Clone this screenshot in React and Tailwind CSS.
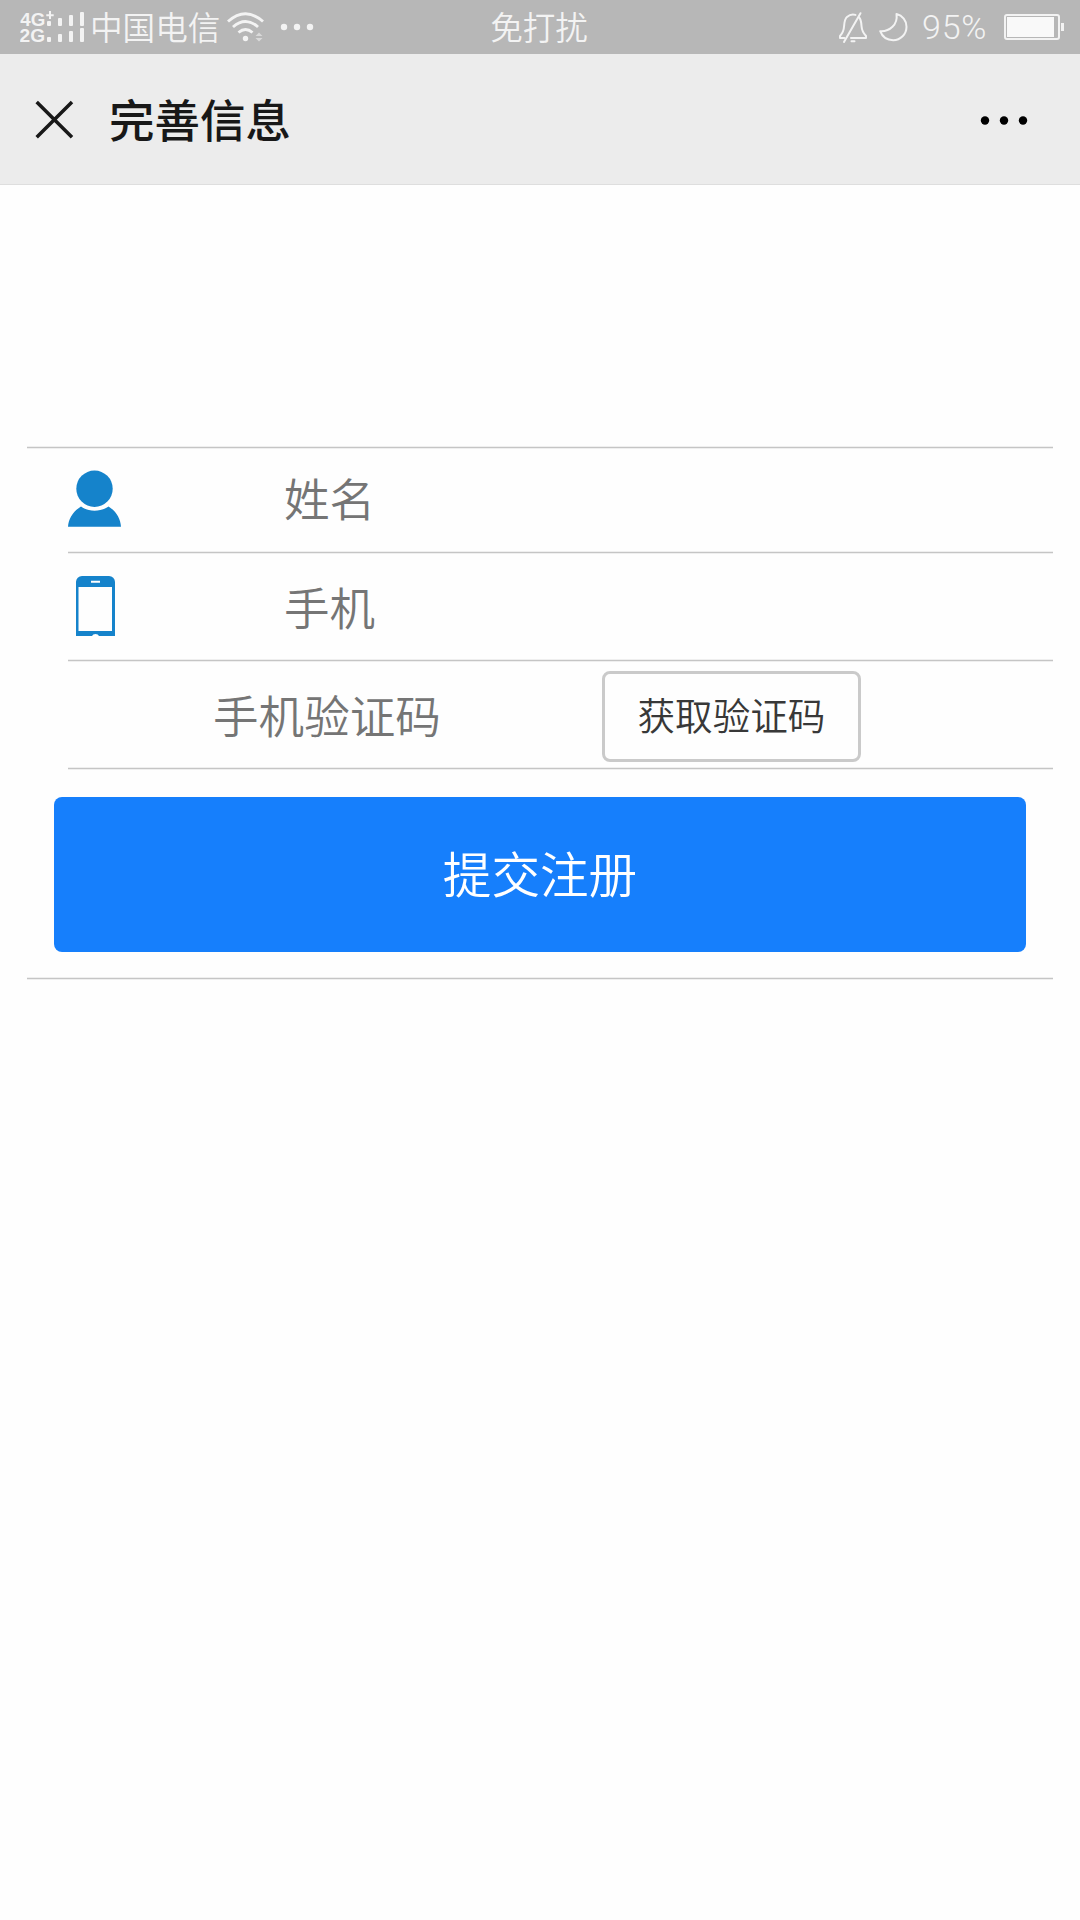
import React from 'react'

const Divider = ({ className = '' }) => (
    <div className={`h-[3px] shrink-0 border-y border-[#efefef] bg-[#c5c5c5] ${className}`} />
)

function SignalIcon() {
    return (
        <div className="flex h-[54px] w-[66px] shrink-0">
            <svg width="66" height="54" viewBox="20 0 66 54" fill="currentColor">
                <g fontFamily="Liberation Sans, sans-serif" fontSize="18.500" fontWeight="700">
                    <text x="20.300" y="25.600" textLength="25" lengthAdjust="spacingAndGlyphs">4G</text>
                    <text x="19.500" y="41.800" textLength="25.500" lengthAdjust="spacingAndGlyphs">2G</text>
                </g>
                <path d="M46.300 14.200h7.400v2h-7.400zM49 11h2v8h-2z" />
                <rect x="47" y="21" width="4" height="5" rx="1" />
                <rect x="58" y="18" width="4" height="8" rx="1" />
                <rect x="69" y="15" width="4" height="11" rx="1" />
                <rect x="80" y="12" width="4" height="14" rx="1" />
                <rect x="47" y="37" width="4" height="5" rx="1" />
                <rect x="58" y="34" width="4" height="8" rx="1" />
                <rect x="69" y="31" width="4" height="11" rx="1" />
                <rect x="80" y="28" width="4" height="14" rx="1" />
            </svg>
        </div>
    )
}

function StatusBar() {
    return (
        <div className="grid h-[54px] grid-cols-[1fr_auto_1fr] items-center bg-[#b7b7b7] text-[32.6px] leading-[54px] font-[350] text-[#f3f3f3]">
            <div className="flex items-center pl-5">
                <SignalIcon />
                <span className="ml-[4px] pb-[3px] leading-[51px]">中国电信</span>
                <svg className="ml-[5px]" width="40" height="54" viewBox="225 0 40 54" fill="none" stroke="currentColor" strokeWidth="2.900">
                    <path d="M228 21.500Q245.500 6 263 21.500" />
                    <path d="M233 27Q245.500 16 258 27" />
                    <path d="M238.500 32.500Q245.500 26.500 252.500 32.500" />
                    <circle cx="245.500" cy="38.500" r="2.700" fill="currentColor" stroke="none" />
                    <path d="M255.500 36l3.500-3.500 3.500 3.500zM255.500 38l3.500 3.500 3.500-3.500z" fill="#d9d9d9" stroke="none" />
                </svg>
                <svg className="ml-[15px]" width="34" height="54" viewBox="280 0 34 54" fill="currentColor">
                    <circle cx="284" cy="27" r="3.200" />
                    <circle cx="297" cy="27" r="3.200" />
                    <circle cx="310" cy="27" r="3.200" />
                </svg>
            </div>
            <span className="pr-[2px] pb-[3px] leading-[51px]">免打扰</span>
            <div className="flex items-center justify-end pr-[16px]">
                <svg width="72" height="54" viewBox="837 0 72 54" fill="none" stroke="currentColor" strokeWidth="2" strokeLinejoin="round" strokeLinecap="round">
                    <path d="M855.500 14.900c-3-.8-6-.2-8.500 2-2.500 2.400-2.600 5-2.900 9.100-.3 5-1.700 7.500-4.100 10v2.100h4.500M851 38.100h15v-2.100c-2.400-2.500-4.100-5-4.500-10-.2-4-.5-6.500-2.300-8.500" />
                    <path d="M860.500 13.200L844 42M851.500 41.200h3" />
                    <path d="M896.500 14c6 1.500 10 6.500 10 12.700 0 7.500-6 13.500-13.300 13.500-6.200 0-11-3.600-13-9 9.500.5 17.800-6.500 16.300-17.200z" />
                </svg>
                <span className="ml-[13px] w-[67px] font-['Roboto',sans-serif] text-[34px] font-[350] tracking-[0.800px]">95%</span>
                <svg className="ml-[15px]" width="60" height="54" viewBox="1004 0 60 54">
                    <rect x="1005" y="15" width="54" height="24" rx="2" fill="none" stroke="currentColor" strokeWidth="2" />
                    <rect x="1007" y="17" width="47" height="20" fill="#f9f9f9" />
                    <rect x="1061" y="23" width="3" height="8" fill="currentColor" />
                </svg>
            </div>
        </div>
    )
}

function NavBar() {
    return (
        <div className="flex h-[131px] items-center border-b border-[#dedede] bg-[#ececec] pr-[52px] pl-[34px] text-[#181818]">
            <svg width="40" height="40" viewBox="0 0 40 40" fill="none" stroke="currentColor" strokeWidth="3.500">
                <path d="M2.700 3l35.300 35.300M38 3L2.700 38.300" />
            </svg>
            <h1 className="ml-[35px] grow pb-[3px] text-[45.500px] leading-[60px] font-medium">完善信息</h1>
            <svg width="48" height="12" viewBox="0 0 48 12" fill="#000">
                <circle cx="5" cy="7.500" r="4.200" />
                <circle cx="24" cy="7.500" r="4.200" />
                <circle cx="43" cy="7.500" r="4.200" />
            </svg>
        </div>
    )
}

function UserIcon() {
    return (
        <svg width="54" height="59" viewBox="0 -1.500 54 59" fill="#1583cb">
            <circle cx="26.500" cy="18.200" r="18.200" />
            <path d="M0 56.300C.5 48 5.500 40.500 13 36c8 5.500 19 5.500 27.500 0C48 40.500 52.500 48 53 56.300z" />
        </svg>
    )
}

function PhoneIcon() {
    return (
        <svg width="54" height="60" viewBox="0 0 54 60" fill="#1583cb">
            <path fillRule="evenodd" d="M8 60V6a6 6 0 0 1 6-6h27a6 6 0 0 1 6 6v54H31a3.700 3 0 0 0-7 0zM10.500 11v44h33.500V11zM23 4.800v2h9v-2z" />
        </svg>
    )
}

export default function App() {
    return (
        <div className="min-h-[1920px] w-[1080px] bg-[#fefefe] font-['Noto_Sans_CJK_SC',sans-serif]">
            <StatusBar />
            <NavBar />

            <form className="mx-[27px] mt-[261px] flex flex-col text-[45.600px] leading-[60px] font-[350] text-[#757575]">
                <Divider />
                <label className="flex h-[102px] items-center pb-[3px] pl-[41px]">
                    <UserIcon />
                    <span className="ml-[162px] pb-[3px]">姓名</span>
                </label>
                <Divider className="ml-[41px]" />
                <label className="flex h-[105px] items-center pb-[2px] pl-[41px]">
                    <PhoneIcon />
                    <span className="ml-[162px]">手机</span>
                </label>
                <Divider className="ml-[41px]" />
                <div className="flex h-[105px] items-center pt-[4px] pl-[186px]">
                    <span className="w-[389px] pb-[6px]">手机验证码</span>
                    <button type="button" className="h-[91px] w-[259px] rounded-lg border-3 border-[#cacaca] pb-[5px] text-[37.600px] font-[350] text-[#383838]">
                        获取验证码
                    </button>
                </div>
                <Divider className="ml-[41px]" />
                <button type="button" className="mx-[27px] mt-[27px] mb-[25px] h-[155px] rounded-lg bg-[#167ffc] pb-[5px] text-[48.600px] font-[350] text-white">
                    提交注册
                </button>
                <Divider />
            </form>
        </div>
    )
}
